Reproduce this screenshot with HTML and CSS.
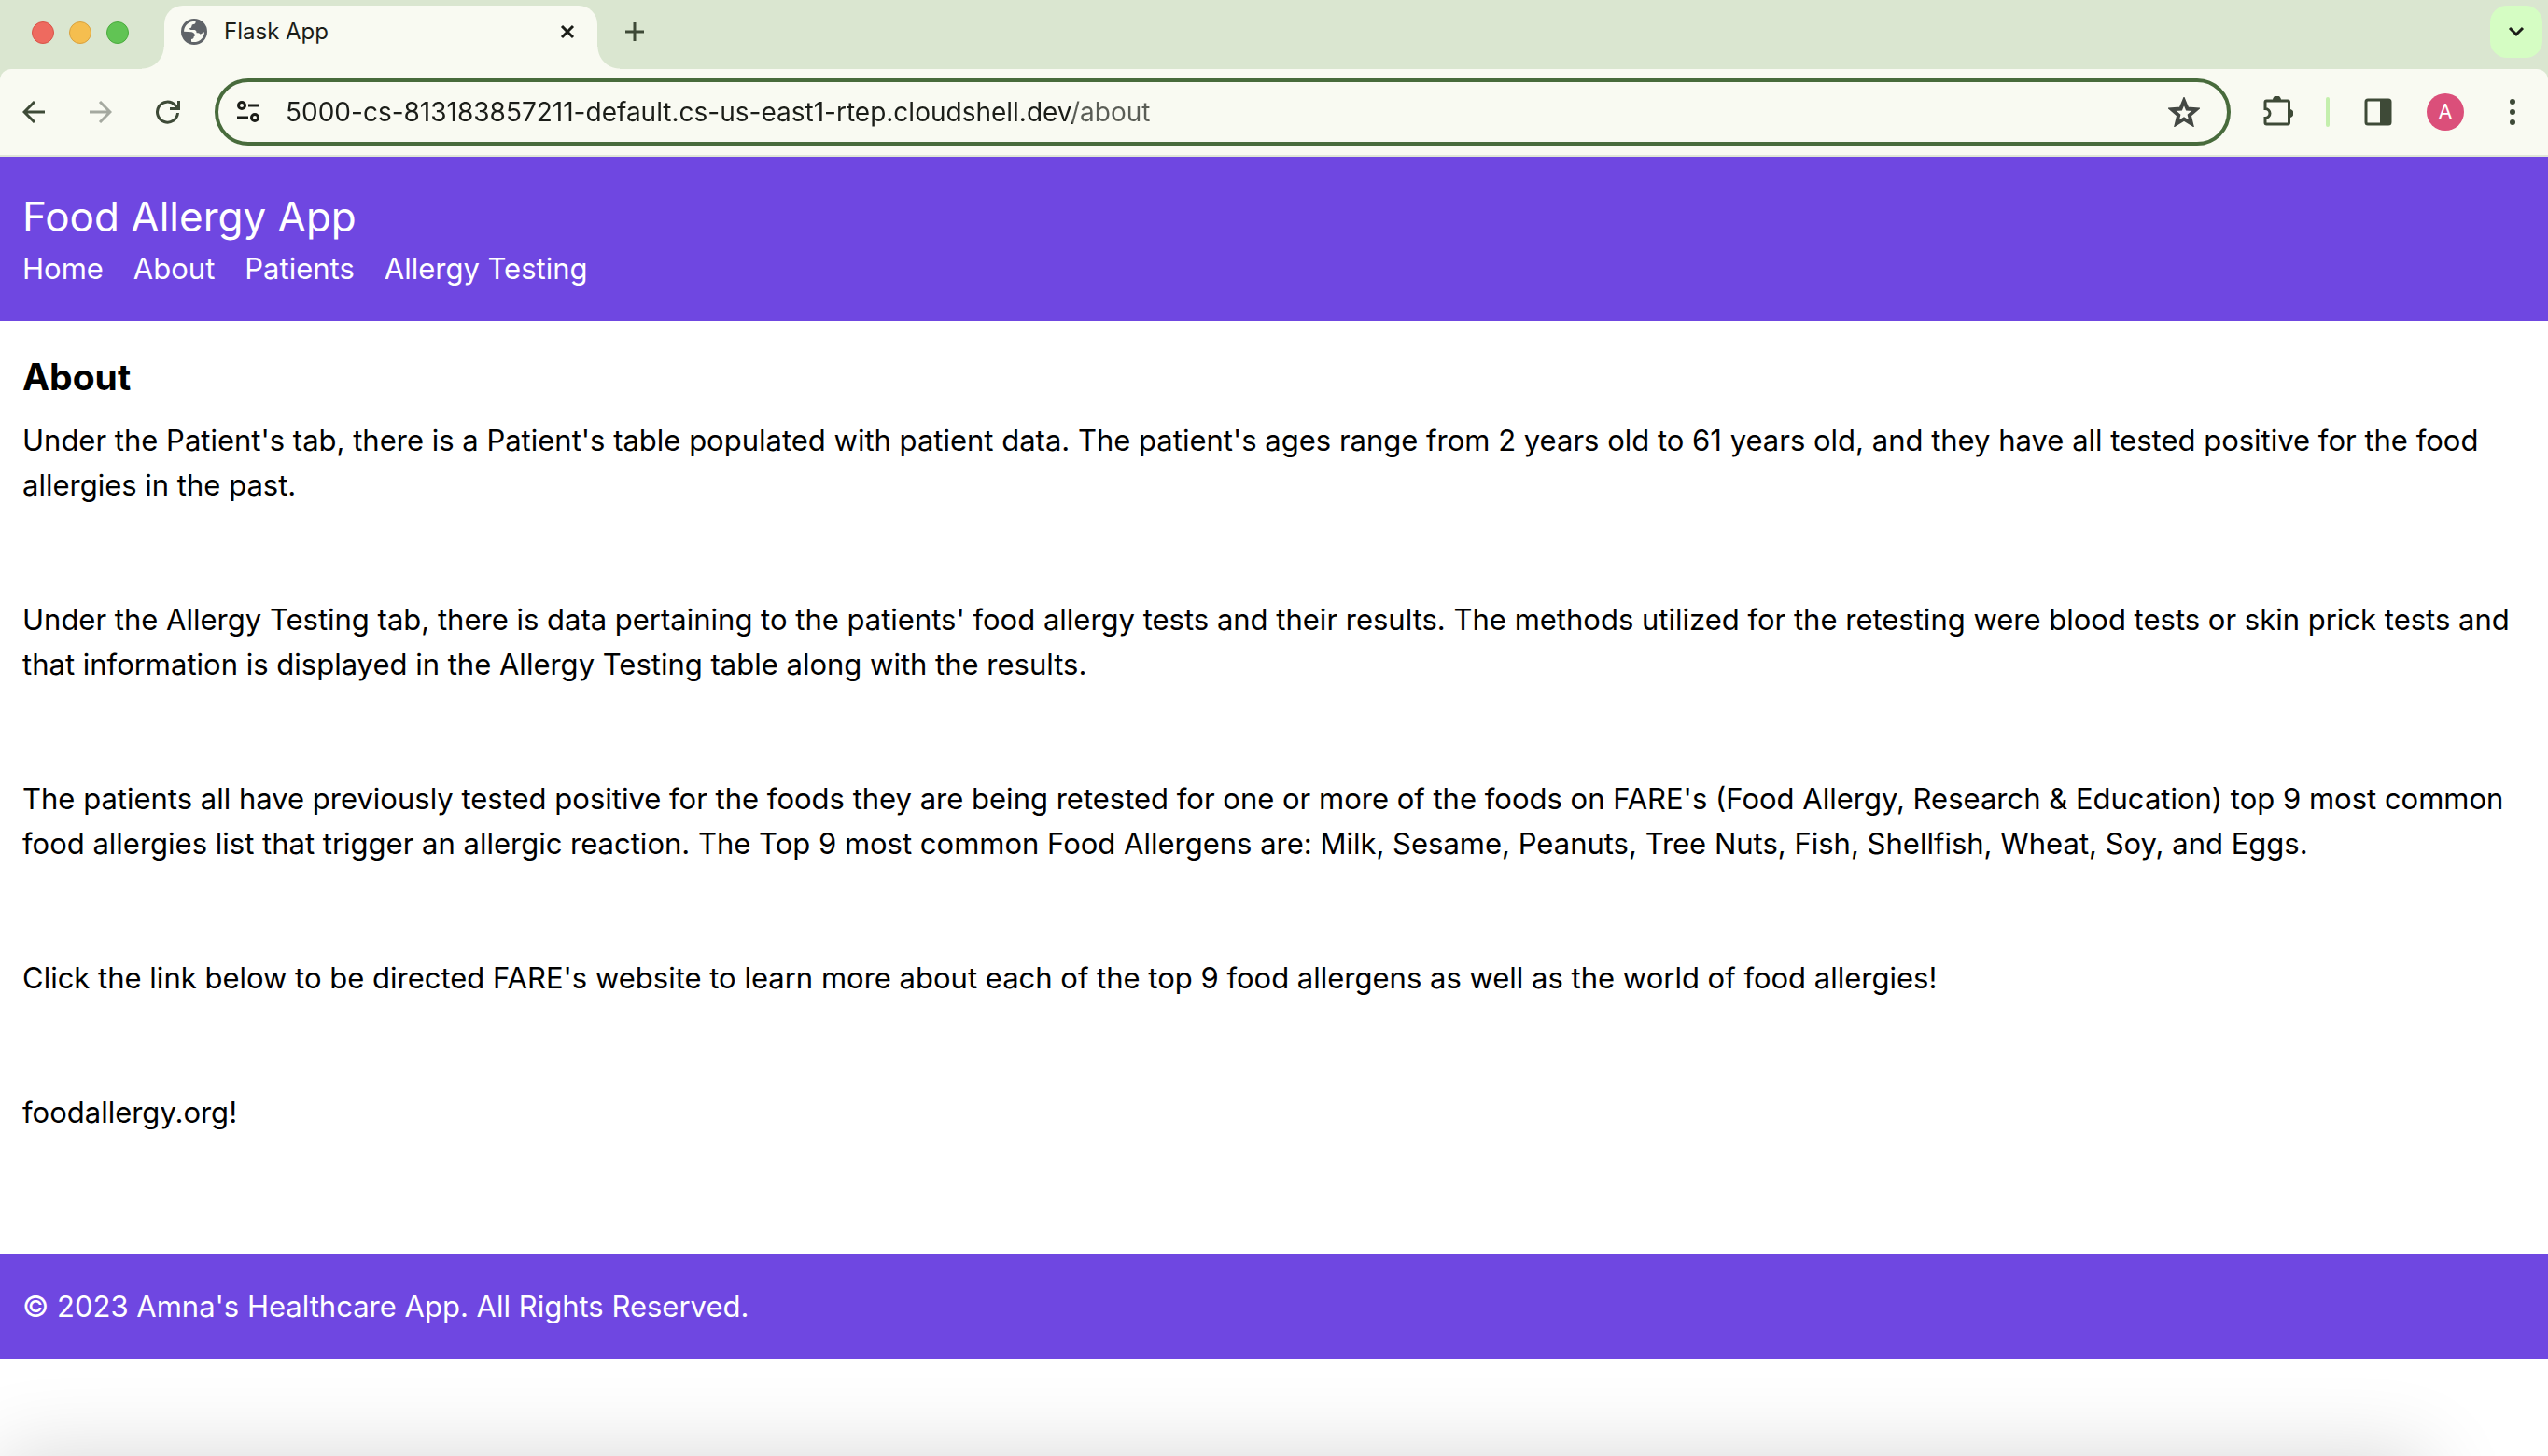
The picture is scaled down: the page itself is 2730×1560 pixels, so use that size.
FILE: index.html
```html
<!DOCTYPE html>
<html lang="en">
<head>
<meta charset="utf-8">
<meta name="viewport" content="width=device-width, initial-scale=1">
<title>Flask App</title>
<link rel="stylesheet" href="styles.css">
</head>
<body>
<div class="tab-strip">
  <div class="window-controls">
    <button class="light light-close" type="button" aria-label="Close window"></button>
    <button class="light light-minimise" type="button" aria-label="Minimise window"></button>
    <button class="light light-zoom" type="button" aria-label="Zoom window"></button>
  </div>
  <div class="tab">
    <svg class="favicon" viewBox="0 0 84 84" aria-hidden="true"><circle cx="42" cy="42" r="42" fill="#5f6368"/><path fill="#f9faf2" d="M9 41A33 33 0 0 1 47 9Q47 18 40 18Q34 18 34 25Q34 31 27 31Q27 37 33 36H44Q50 37 50 46Q60 44 62 50Q66 48 75 43A33 33 0 0 1 33 74V66Q41 66 41 58Q46 56 44 50Q40 44 34 43Z"/></svg>
    <span class="tab-title">Flask App</span>
    <button class="tab-close" type="button" aria-label="Close tab"><svg width="16" height="16" viewBox="0 0 16 16"><path d="M2 2l12 12M14 2L2 14"/></svg></button>
  </div>
  <button class="new-tab" type="button" aria-label="New tab"><svg width="20" height="20" viewBox="0 0 20 20"><path d="M10 0v20M0 10h20"/></svg></button>
  <button class="tab-search" type="button" aria-label="Search tabs"><svg width="20" height="20" viewBox="0 0 20 20"><path d="M3 6l7 7 7-7"/></svg></button>
</div>

<div class="toolbar">
  <button class="tool" type="button" aria-label="Back"><svg width="24" height="24" viewBox="0 0 24 24"><path d="M24 12H2M13 1L2 12l11 11"/></svg></button>
  <button class="tool tool-off" type="button" aria-label="Forward" disabled><svg width="24" height="24" viewBox="0 0 24 24"><path d="M0 12h22M11 1l11 11-11 11"/></svg></button>
  <button class="tool" type="button" aria-label="Reload"><svg width="26" height="26" viewBox="0 0 26 26"><path d="M23.500 14A11 11 0 1 1 20.500 5.500L24 9M24.500 1v8.500H15"/></svg></button>
  <div class="omnibox">
    <button class="site-info" type="button" aria-label="View site information"><svg width="24" height="24" viewBox="0 0 24 24"><circle cx="5" cy="5" r="3.500"/><path d="M12 5h12M0 18h12"/><circle cx="19" cy="18" r="3.500"/></svg></button>
    <input class="address" type="text" aria-label="Address" value="5000-cs-813183857211-default.cs-us-east1-rtep.cloudshell.dev/about" spellcheck="false">
    <button class="bookmark" type="button" aria-label="Bookmark this tab"><svg width="34" height="32" viewBox="0 0 34 32"><path d="M17 4l3.500 8.500 9.500.7-7.200 6.200 2.200 9.100-8-4.900-8 4.900 2.200-9.100L4 13.200l9.500-.7z"/></svg></button>
  </div>
  <button class="tool" type="button" aria-label="Extensions"><svg width="34" height="34" viewBox="-1 0 34 34"><path d="M3 6.500Q3 5 4.500 5H27Q28.500 5 28.500 6.500V28.500Q28.500 30 27 30H4.500Q3 30 3 28.500V23.500A5 5 0 0 0 3 13.500Z"/><path class="solid" d="M11 4a4.500 4.500 0 0 1 9 0zM29 14a4.500 4.500 0 0 1 0 9z"/></svg></button>
  <span class="divider"></span>
  <button class="tool" type="button" aria-label="Side panel"><svg width="30" height="30" viewBox="0 0 30 30"><rect x="2" y="2" width="26" height="26" rx="2"/><path class="solid" d="M17 2h11v26H17z"/></svg></button>
  <button class="tool" type="button" aria-label="Profile"><span class="avatar">A</span></button>
  <button class="tool" type="button" aria-label="Menu"><svg width="8" height="28" viewBox="0 0 8 28"><g class="solid"><circle cx="4" cy="3" r="3"/><circle cx="4" cy="14" r="3"/><circle cx="4" cy="25" r="3"/></g></svg></button>
</div>

<div class="page">
  <header class="banner">
    <h1 class="site-title">Food Allergy App</h1>
    <nav class="site-nav">
      <a href="#home">Home</a>
      <a href="#about">About</a>
      <a href="#patients">Patients</a>
      <a href="#testing">Allergy Testing</a>
    </nav>
  </header>
  <main class="content">
    <h2 class="heading">About</h2>
    <p>Under the Patient's tab, there is a Patient's table populated with patient data. The patient's ages range from 2 years old to 61 years old, and they have all tested positive for the food allergies in the past.</p>
    <p>Under the Allergy Testing tab, there is data pertaining to the patients' food allergy tests and their results. The methods utilized for the retesting were blood tests or skin prick tests and that information is displayed in the Allergy Testing table along with the results.</p>
    <p>The patients all have previously tested positive for the foods they are being retested for one or more of the foods on FARE's (Food Allergy, Research &amp; Education) top 9 most common food allergies list that trigger an allergic reaction. The Top 9 most common Food Allergens are: Milk, Sesame, Peanuts, Tree Nuts, Fish, Shellfish, Wheat, Soy, and Eggs.</p>
    <p>Click the link below to be directed FARE's website to learn more about each of the top 9 food allergens as well as the world of food allergies!</p>
    <p><a href="#foodallergy">foodallergy.org!</a></p>
  </main>
  <footer class="site-footer">© 2023 Amna's Healthcare App. All Rights Reserved.</footer>
  <div class="edge-shadow"></div>
</div>
</body>
</html>
```
FILE: styles.css
```css
* {
  box-sizing: border-box;
}

body {
  margin: 0;
  min-height: 100vh;
  display: flex;
  flex-direction: column;
  background: #dae6d0;
  color: #000;
  font-family: Inter, "Liberation Sans", sans-serif;
  font-size: 31px;
  line-height: 48px;
}

a {
  color: inherit;
  text-decoration: none;
}

button {
  display: flex;
  align-items: center;
  justify-content: center;
  padding: 0;
  border: 0;
  background: none;
  color: #3e4a37;
  font: inherit;
}

svg {
  display: block;
  fill: none;
  stroke: currentColor;
  stroke-width: 3;
}

.solid {
  fill: currentColor;
  stroke: none;
}

/* Tab strip */
.tab-strip {
  display: flex;
  align-items: flex-start;
  padding: 6px 6px 0 34px;
}

.window-controls {
  display: flex;
  gap: 16px;
  padding-top: 17px;
  margin-right: 38px;
}

.light {
  width: 24px;
  height: 24px;
  border: 1px solid #d95448;
  border-radius: 50%;
  background: #ee6a5f;
}

.light-minimise {
  border-color: #d9a23f;
  background: #f5be4f;
}

.light-zoom {
  border-color: #4bab3e;
  background: #61c454;
}

.tab {
  position: relative;
  display: flex;
  align-items: center;
  width: 464px;
  height: 68px;
  padding: 0 20px 12px 18px;
  border-radius: 20px 20px 0 0;
  background: #f9faf2;
}

.tab::before,
.tab::after {
  content: "";
  position: absolute;
  bottom: 0;
  width: 24px;
  height: 24px;
}

.tab::before {
  right: 100%;
  background: radial-gradient(circle at 0 0, transparent 23px, #f9faf2 24px);
}

.tab::after {
  left: 100%;
  background: radial-gradient(circle at 100% 0, transparent 23px, #f9faf2 24px);
}

.favicon {
  width: 28px;
  height: 28px;
  stroke: none;
}

.tab-title {
  flex: 1;
  margin-left: 18px;
  color: #1b1d18;
  font-size: 24px;
  line-height: 32px;
}

.tab-close {
  width: 24px;
  height: 32px;
  color: #1b1d18;
}

.new-tab {
  width: 56px;
  height: 56px;
  margin: 0 auto 0 12px;
}

.tab-search {
  width: 56px;
  height: 56px;
  border-radius: 18px;
  background: #d5fdc3;
  color: #1b1d18;
}

/* Toolbar */
.toolbar {
  display: flex;
  align-items: center;
  height: 94px;
  padding: 0 2px 0 0;
  border-bottom: 2px solid #e0e5d8;
  border-radius: 12px 12px 0 0;
  background: #f9faf2;
}

.tool {
  width: 72px;
  height: 72px;
}

.tool-off {
  color: #a5a9a0;
}

.omnibox {
  flex: 1;
  display: flex;
  align-items: center;
  height: 72px;
  margin: 0 14px;
  padding: 0 29px 0 20px;
  border: 4px solid #486b3c;
  border-radius: 36px;
}

.site-info {
  width: 24px;
  margin-right: 28px;
  color: #1b1d18;
}

/* The host is dark and the path after it is grey */
.address {
  flex: 1;
  min-width: 0;
  height: 48px;
  padding: 0;
  border: 0;
  outline: 0;
  background: linear-gradient(90deg, #1b1d18 843px, #5a5d56 843px);
  background-clip: text;
  color: transparent;
  font: inherit;
  font-size: 28px;
}

.bookmark {
  color: #444844;
}

.bookmark svg {
  stroke-width: 4;
}

.divider {
  width: 4px;
  height: 32px;
  margin: 0 16px;
  border-radius: 2px;
  background: #c4efad;
}

.avatar {
  width: 40px;
  height: 40px;
  border-radius: 50%;
  background: #db4f7a;
  color: #fff;
  font-family: Roboto, sans-serif;
  font-size: 22px;
  line-height: 40px;
}

/* Page */
.page {
  position: relative;
  flex: 1;
  overflow: hidden;
  background: #fff;
}

.banner,
.site-footer {
  padding: 32px 24px;
  background: #6f47e1;
  color: #fff;
}

.site-title {
  margin: 0;
  font-size: 44px;
  font-weight: 400;
  line-height: 64px;
}

.site-nav {
  display: flex;
  gap: 32px;
}

.content {
  padding: 32px 24px;
}

.heading {
  margin: 0 0 16px;
  font-size: 39px;
  font-weight: 700;
  line-height: 56px;
}

.content p {
  margin: 0 0 96px;
}

.edge-shadow {
  position: absolute;
  top: 100%;
  left: 0;
  right: 130px;
  height: 200px;
  box-shadow: 0 0 90px rgba(0, 0, 0, 0.16);
}
```
